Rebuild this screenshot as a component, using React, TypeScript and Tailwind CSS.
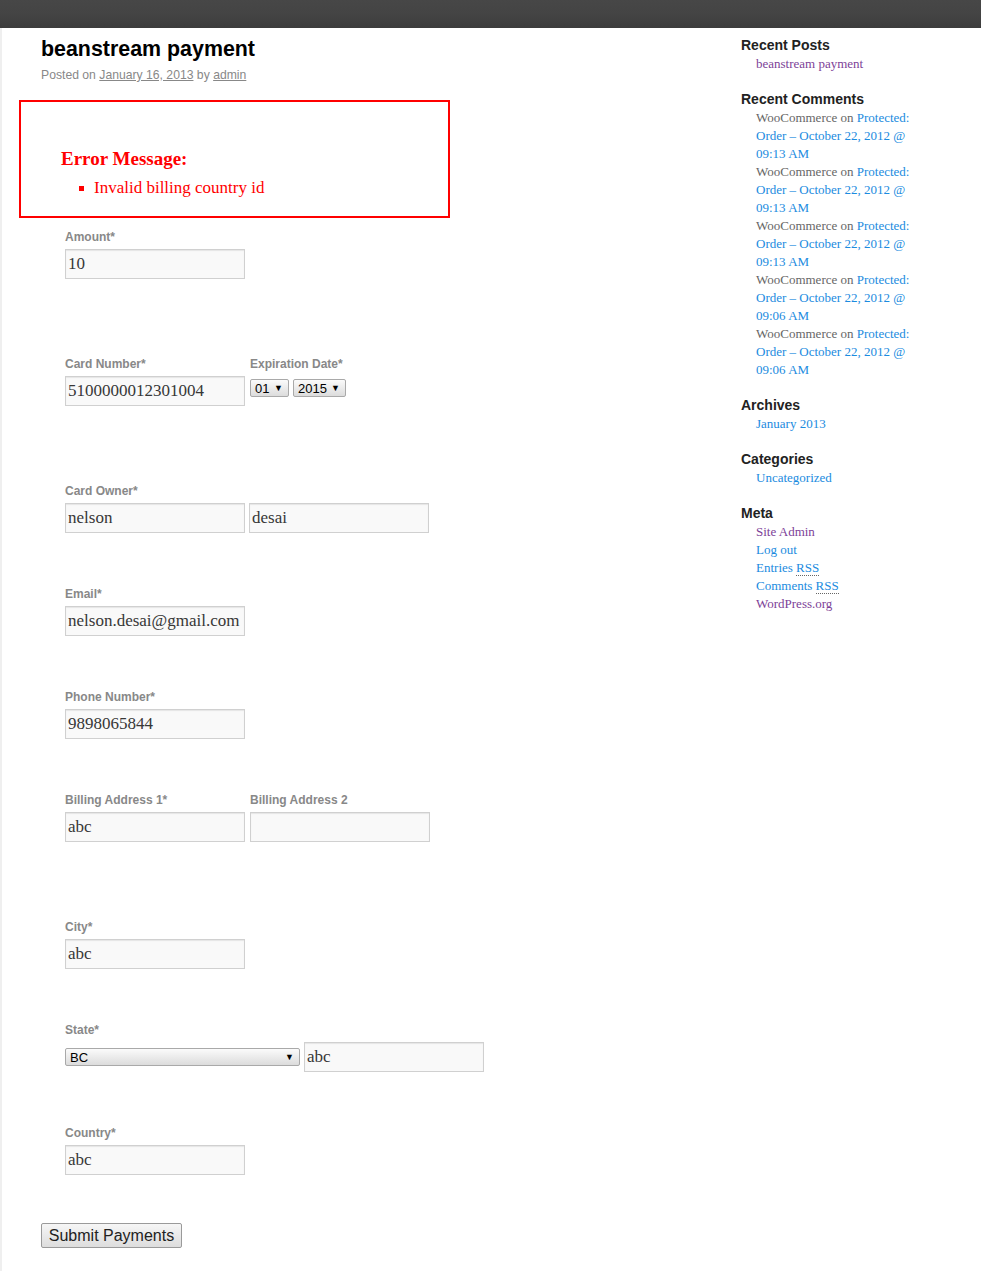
import React from 'react'

const serif = "font-['Liberation_Serif',serif]"
const sans = "font-['Liberation_Sans',Arial,sans-serif]"

function Label({ children }: { children: React.ReactNode }) {
	return <div className={`${sans} text-[12px] leading-[16px] font-bold text-[#888]`}>{children}</div>
}

function TextBox({ value, w = 'w-[180px]' }: { value: string; w?: string }) {
	return (
		<input
			readOnly
			defaultValue={value}
			className={`${serif} ${w} h-[30px] border border-[#d0d0d0] bg-[#f9f9f9] px-[2px] text-[17px] text-[#373737] shadow-[inset_0_1px_1px_rgba(0,0,0,0.08)] outline-none`}
		/>
	)
}

function FakeSelect({ value, w }: { value: string; w: string }) {
	return (
		<div
			className={`${sans} ${w} h-[18px] flex items-center justify-between pl-[4px] pr-[5px] border border-[#a9a9a9] rounded-[2px] bg-gradient-to-b from-[#fbfbfb] to-[#dcdcdc] text-[13px] leading-none text-black`}
		>
			<span>{value}</span>
			<span className="text-[9px]">▼</span>
		</div>
	)
}

const comments = ['09:13 AM', '09:13 AM', '09:13 AM', '09:06 AM', '09:06 AM']

function Widget({ title, children, last }: { title: string; children: React.ReactNode; last?: boolean }) {
	return (
		<div className={last ? '' : 'mb-[17px]'}>
			<h3 className={`${sans} text-[14px] leading-[18px] font-bold text-[#222]`}>{title}</h3>
			<ul className={`${serif} ml-[15px] mt-[1px] w-[170px] text-[13px] leading-[18px]`}>{children}</ul>
		</div>
	)
}

export default function App() {
	return (
		<div className="min-h-[1271px] flex flex-col bg-white">
			{/* admin bar */}
			<div className="h-[28px] shrink-0 bg-gradient-to-b from-[#474747] via-[#444] to-[#3c3c3c]" />

			<div className="flex flex-1 border-l-2 border-[#efefef]">
				{/* main column */}
				<div className="w-[739px] pl-[39px]">
					<h1 className={`${sans} mt-[8px] text-[21.4px] leading-[26px] font-bold text-black`}>beanstream payment</h1>
					<div className={`${sans} mt-[5px] text-[12.2px] leading-[16px] text-[#888]`}>
						Posted on <span className="underline">January 16, 2013</span> by <span className="underline">admin</span>
					</div>

					{/* error box */}
					<div className="mt-[17px] ml-[-22px] w-[431px] h-[118px] border-2 border-[#ff0000] pl-[40px] pt-[45px]">
						<div className={`${serif} text-[19px] leading-[24px] font-bold text-[#ff0000]`}>Error Message:</div>
						<ul className="mt-[5px]">
							<li className={`${serif} flex items-center text-[17px] leading-[24px] text-[#ff0000]`}>
								<span className="ml-[18px] mr-[10px] w-[5px] h-[5px] bg-[#ff0000]" />
								Invalid billing country id
							</li>
						</ul>
					</div>

					{/* form */}
					<div className="pl-[24px]">
						<div className="mt-[11px]">
							<Label>Amount*</Label>
							<div className="mt-[4px]">
								<TextBox value="10" />
							</div>
						</div>

						<div className="mt-[77px] flex gap-[5px]">
							<div>
								<Label>Card Number*</Label>
								<div className="mt-[4px]">
									<TextBox value="5100000012301004" />
								</div>
							</div>
							<div>
								<Label>Expiration Date*</Label>
								<div className="mt-[7px] flex gap-[4px]">
									<FakeSelect value="01" w="w-[39px]" />
									<FakeSelect value="2015" w="w-[53px]" />
								</div>
							</div>
						</div>

						<div className="mt-[77px]">
							<Label>Card Owner*</Label>
							<div className="mt-[4px] flex gap-[4px]">
								<TextBox value="nelson" />
								<TextBox value="desai" />
							</div>
						</div>

						<div className="mt-[53px]">
							<Label>Email*</Label>
							<div className="mt-[4px]">
								<TextBox value="nelson.desai@gmail.com" />
							</div>
						</div>

						<div className="mt-[53px]">
							<Label>Phone Number*</Label>
							<div className="mt-[4px]">
								<TextBox value="9898065844" />
							</div>
						</div>

						<div className="mt-[53px] flex gap-[5px]">
							<div>
								<Label>Billing Address 1*</Label>
								<div className="mt-[4px]">
									<TextBox value="abc" />
								</div>
							</div>
							<div>
								<Label>Billing Address 2</Label>
								<div className="mt-[4px]">
									<TextBox value="" />
								</div>
							</div>
						</div>

						<div className="mt-[77px]">
							<Label>City*</Label>
							<div className="mt-[4px]">
								<TextBox value="abc" />
							</div>
						</div>

						<div className="mt-[53px]">
							<Label>State*</Label>
							<div className="mt-[4px] flex items-center gap-[4px]">
								<FakeSelect value="BC" w="w-[235px]" />
								<TextBox value="abc" />
							</div>
						</div>

						<div className="mt-[53px]">
							<Label>Country*</Label>
							<div className="mt-[4px]">
								<TextBox value="abc" />
							</div>
						</div>
					</div>

					<button
						className={`${sans} mt-[48px] h-[25px] w-[141px] border border-[#9a9a9a] rounded-[2px] bg-gradient-to-b from-[#f6f6f6] to-[#dddddd] text-[16px] leading-none text-[#222]`}
					>
						Submit Payments
					</button>
				</div>

				{/* sidebar */}
				<div className="pt-[8px]">
					<Widget title="Recent Posts">
						<li className="text-[#7d3f98]">beanstream payment</li>
					</Widget>
					<Widget title="Recent Comments">
						{comments.map((t, i) => (
							<li key={i} className="text-[#666]">
								WooCommerce on <span className="text-[#1b8be0]">Protected: Order – October 22, 2012 @ {t}</span>
							</li>
						))}
					</Widget>
					<Widget title="Archives">
						<li className="text-[#1b8be0]">January 2013</li>
					</Widget>
					<Widget title="Categories">
						<li className="text-[#1b8be0]">Uncategorized</li>
					</Widget>
					<Widget title="Meta" last>
						<li className="text-[#7d3f98]">Site Admin</li>
						<li className="text-[#1b8be0]">Log out</li>
						<li className="text-[#1b8be0]">
							Entries <abbr className="no-underline border-b border-dotted border-[#666]">RSS</abbr>
						</li>
						<li className="text-[#1b8be0]">
							Comments <abbr className="no-underline border-b border-dotted border-[#666]">RSS</abbr>
						</li>
						<li className="text-[#7d3f98]">WordPress.org</li>
					</Widget>
				</div>
			</div>
		</div>
	)
}
